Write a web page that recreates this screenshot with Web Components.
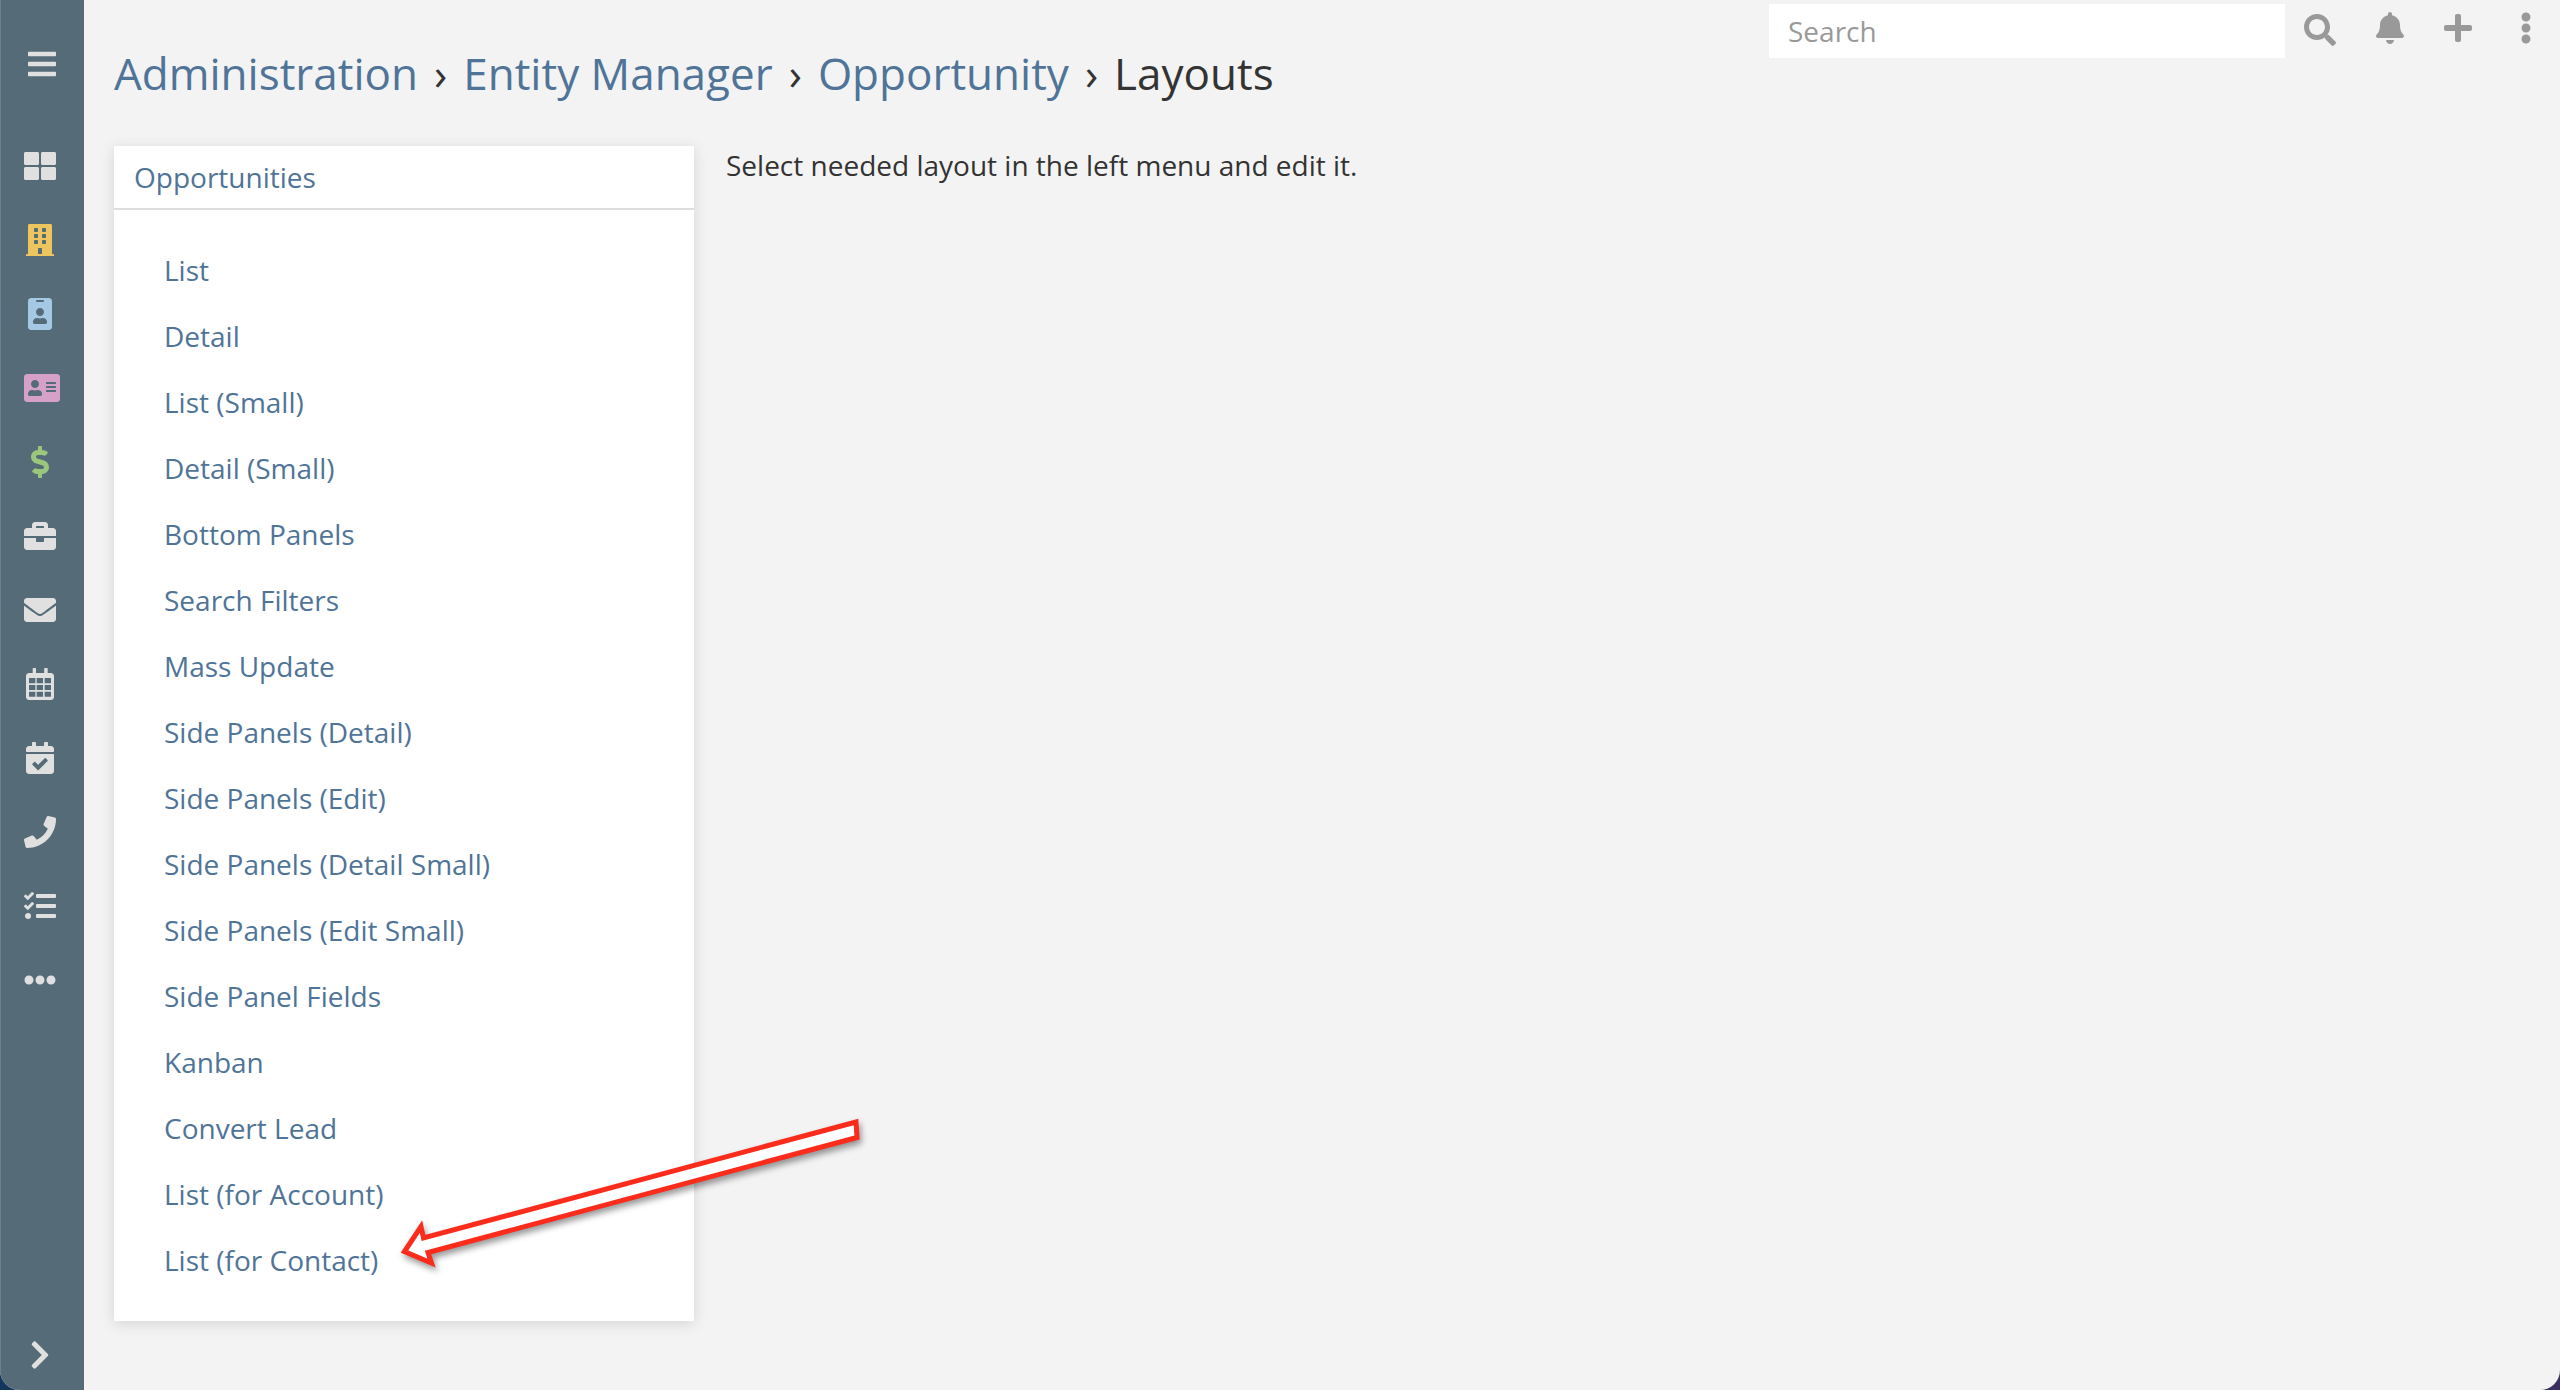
<!DOCTYPE html>
<html lang="en">
<head>
<meta charset="utf-8">
<title>Layouts</title>
<style>
html, body { margin: 0; height: 100%; overflow: hidden; }
body {
    background: linear-gradient(90deg, #14365c, #3a2f5e);
    font-family: "Open Sans", sans-serif;
    color: #333;
}
</style>
</head>
<body>
<crm-app>
    <crm-sidenav slot="nav"></crm-sidenav>
    <crm-header slot="header">
        <crm-crumbs slot="title" items="Administration,Entity Manager,Opportunity" current="Layouts"></crm-crumbs>
        <crm-tools slot="tools"></crm-tools>
    </crm-header>
    <crm-menu title-text="Opportunities" slot="menu">
        <a>List</a>
        <a>Detail</a>
        <a>List (Small)</a>
        <a>Detail (Small)</a>
        <a>Bottom Panels</a>
        <a>Search Filters</a>
        <a>Mass Update</a>
        <a>Side Panels (Detail)</a>
        <a>Side Panels (Edit)</a>
        <a>Side Panels (Detail Small)</a>
        <a>Side Panels (Edit Small)</a>
        <a>Side Panel Fields</a>
        <a>Kanban</a>
        <a>Convert Lead</a>
        <a>List (for Account)</a>
        <a>List (for Contact)</a>
    </crm-menu>
    <span slot="content">Select needed layout in the left menu and edit it.</span>
    <crm-arrow slot="overlay"></crm-arrow>
</crm-app>
<script>
const ICONS = {
    bars: [448, 'M16 132h416c8.837 0 16-7.163 16-16V76c0-8.837-7.163-16-16-16H16C7.163 60 0 67.163 0 76v40c0 8.837 7.163 16 16 16zm0 160h416c8.837 0 16-7.163 16-16v-40c0-8.837-7.163-16-16-16H16c-8.837 0-16 7.163-16 16v40c0 8.837 7.163 16 16 16zm0 160h416c8.837 0 16-7.163 16-16v-40c0-8.837-7.163-16-16-16H16c-8.837 0-16 7.163-16 16v40c0 8.837 7.163 16 16 16z'],
    grid: [512, 'M296 32h192c13.255 0 24 10.745 24 24v160c0 13.255-10.745 24-24 24H296c-13.255 0-24-10.745-24-24V56c0-13.255 10.745-24 24-24zm-80 0H24C10.745 32 0 42.745 0 56v160c0 13.255 10.745 24 24 24h192c13.255 0 24-10.745 24-24V56c0-13.255-10.745-24-24-24zM0 296v160c0 13.255 10.745 24 24 24h192c13.255 0 24-10.745 24-24V296c0-13.255-10.745-24-24-24H24c-13.255 0-24 10.745-24 24zm296 184h192c13.255 0 24-10.745 24-24V296c0-13.255-10.745-24-24-24H296c-13.255 0-24 10.745-24 24v160c0 13.255 10.745 24 24 24z'],
    building: [448, 'M436 480h-20V24c0-13.255-10.745-24-24-24H56C42.745 0 32 10.745 32 24v456H12c-6.627 0-12 5.373-12 12v20h448v-20c0-6.627-5.373-12-12-12zM128 76c0-6.627 5.373-12 12-12h40c6.627 0 12 5.373 12 12v40c0 6.627-5.373 12-12 12h-40c-6.627 0-12-5.373-12-12V76zm0 96c0-6.627 5.373-12 12-12h40c6.627 0 12 5.373 12 12v40c0 6.627-5.373 12-12 12h-40c-6.627 0-12-5.373-12-12v-40zm52 148h-40c-6.627 0-12-5.373-12-12v-40c0-6.627 5.373-12 12-12h40c6.627 0 12 5.373 12 12v40c0 6.627-5.373 12-12 12zm76 160h-64v-84c0-6.627 5.373-12 12-12h40c6.627 0 12 5.373 12 12v84zm64-172c0 6.627-5.373 12-12 12h-40c-6.627 0-12-5.373-12-12v-40c0-6.627 5.373-12 12-12h40c6.627 0 12 5.373 12 12v40zm0-96c0 6.627-5.373 12-12 12h-40c-6.627 0-12-5.373-12-12v-40c0-6.627 5.373-12 12-12h40c6.627 0 12 5.373 12 12v40zm0-96c0 6.627-5.373 12-12 12h-40c-6.627 0-12-5.373-12-12V76c0-6.627 5.373-12 12-12h40c6.627 0 12 5.373 12 12v40z'],
    badge: [384, 'M336 0H48C21.5 0 0 21.5 0 48v416c0 26.5 21.5 48 48 48h288c26.5 0 48-21.5 48-48V48c0-26.5-21.5-48-48-48zM144 32h96c8.8 0 16 7.2 16 16s-7.2 16-16 16h-96c-8.8 0-16-7.2-16-16s7.2-16 16-16zm48 128c35.3 0 64 28.7 64 64s-28.7 64-64 64-64-28.7-64-64 28.7-64 64-64zm112 236.8c0 10.6-10 19.2-22.4 19.2H102.4C90 416 80 407.4 80 396.8v-19.2c0-31.8 30.1-57.6 67.2-57.6h5c12.3 5.1 25.7 8 39.8 8s27.6-2.9 39.8-8h5c37.1 0 67.2 25.8 67.2 57.6v19.2z'],
    card: [576, 'M528 32H48C21.5 32 0 53.5 0 80v352c0 26.5 21.5 48 48 48h480c26.5 0 48-21.5 48-48V80c0-26.5-21.5-48-48-48zm-352 96c35.3 0 64 28.7 64 64s-28.7 64-64 64-64-28.7-64-64 28.7-64 64-64zm112 236.8c0 10.6-10 19.2-22.4 19.2H86.4C74 384 64 375.4 64 364.8v-19.2c0-31.8 30.1-57.6 67.2-57.6h5c12.3 5.1 25.7 8 39.8 8s27.6-2.9 39.8-8h5c37.1 0 67.2 25.8 67.2 57.6v19.2zM512 312c0 4.4-3.6 8-8 8H360c-4.4 0-8-3.6-8-8v-16c0-4.4 3.6-8 8-8h144c4.4 0 8 3.6 8 8v16zm0-64c0 4.4-3.6 8-8 8H360c-4.4 0-8-3.6-8-8v-16c0-4.4 3.6-8 8-8h144c4.4 0 8 3.6 8 8v16zm0-64c0 4.4-3.6 8-8 8H360c-4.4 0-8-3.6-8-8v-16c0-4.4 3.6-8 8-8h144c4.4 0 8 3.6 8 8v16z'],
    dollar: [288, 'M209.2 233.4l-108-31.6C88.7 198.2 80 186.5 80 173.5c0-16.3 13.2-29.5 29.5-29.5h66.3c12.2 0 24.2 3.7 34.2 10.5 6.1 4.1 14.3 3.1 19.5-2l34.8-34c7.1-6.9 6.1-18.4-1.8-24.5C238 74.8 207.4 64.1 176 64V16c0-8.8-7.2-16-16-16h-32c-8.8 0-16 7.2-16 16v48h-2.5C45.8 64-5.4 118.7.5 183.6c4.2 46.1 39.4 83.6 83.8 96.6l102.5 30c12.5 3.7 21.2 15.3 21.2 28.3 0 16.3-13.2 29.5-29.5 29.5h-66.3C100 368 88 364.3 78 357.5c-6.1-4.1-14.3-3.1-19.5 2l-34.8 34c-7.1 6.9-6.1 18.4 1.8 24.5 24.5 19.2 55.1 29.9 86.5 30v48c0 8.8 7.2 16 16 16h32c8.8 0 16-7.2 16-16v-48.2c46.6-.9 90.3-28.6 105.7-72.7 21.5-61.6-14.6-124.8-72.5-141.7z'],
    briefcase: [512, 'M320 336c0 8.84-7.16 16-16 16h-96c-8.84 0-16-7.16-16-16v-48H0v144c0 25.6 22.4 48 48 48h416c25.6 0 48-22.4 48-48V288H320v48zm144-208h-80V80c0-25.6-22.4-48-48-48H176c-25.6 0-48 22.4-48 48v48H48c-25.6 0-48 22.4-48 48v80h512v-80c0-25.6-22.4-48-48-48zm-144 0H192V96h128v32z'],
    envelope: [512, 'M502.3 190.8c3.9-3.1 9.7-.2 9.7 4.7V400c0 26.5-21.5 48-48 48H48c-26.5 0-48-21.5-48-48V195.6c0-5 5.7-7.8 9.7-4.7 22.4 17.4 52.1 39.5 154.1 113.6 21.1 15.4 56.7 47.8 92.2 47.6 35.7.3 72-32.8 92.3-47.6 102-74.1 131.6-96.3 154-113.7zM256 320c23.2.4 56.6-29.2 73.4-41.4 132.7-96.3 142.8-104.7 173.4-128.7 5.8-4.5 9.2-11.5 9.2-18.9v-19c0-26.5-21.5-48-48-48H48C21.5 64 0 85.5 0 112v19c0 7.4 3.4 14.3 9.2 18.9 30.6 23.9 40.7 32.4 173.4 128.7 16.8 12.2 50.2 41.8 73.4 41.4z'],
    calendar: [448, 'M107 12c0-6.6 5.4-12 12-12h29c6.6 0 12 5.4 12 12v68h131V12c0-6.6 5.4-12 12-12h32c6.600 0 12 5.400 12 12v68h53c26.500 0 48 21.500 48 48v336c0 26.500-21.500 48-48 48H48c-26.500 0-48-21.500-48-48V128c0-26.500 21.500-48 48-48h59zM48 160v85h102v-85zm123 0v85h101v-85zm127 0v85h102v-85zM48 272v80h102v-80zm123 0v80h101v-80zm127 0v80h102v-80zM48 379v80h102v-80zm123 0v80h101v-80zm127 0v80h102v-80z'],
    check: [448, 'M436 160H12c-6.627 0-12-5.373-12-12v-36c0-26.51 21.49-48 48-48h48V12c0-6.627 5.373-12 12-12h40c6.627 0 12 5.373 12 12v52h128V12c0-6.627 5.373-12 12-12h40c6.627 0 12 5.373 12 12v52h48c26.51 0 48 21.49 48 48v36c0 6.627-5.373 12-12 12zM12 192h424c6.627 0 12 5.373 12 12v260c0 26.51-21.49 48-48 48H48c-26.51 0-48-21.49-48-48V204c0-6.627 5.373-12 12-12zm333.296 95.947l-28.169-28.398c-4.667-4.705-12.265-4.736-16.97-.068L194.12 364.665l-45.98-46.352c-4.667-4.705-12.266-4.736-16.971-.068l-28.397 28.17c-4.705 4.667-4.736 12.265-.068 16.97l82.601 83.269c4.667 4.705 12.265 4.736 16.97.068l142.953-141.805c4.705-4.667 4.736-12.265.068-16.97z'],
    phone: [512, 'M493.4 24.6l-104-24c-11.3-2.6-22.9 3.3-27.5 13.9l-48 112c-4.2 9.8-1.4 21.3 6.9 28l60.6 49.6c-36 76.7-98.9 140.5-177.2 177.2l-49.6-60.6c-6.800-8.300-18.200-11.100-28-6.900l-112 48C3.900 366.500-2 378.100.6 389.400l24 104C27.100 504.200 36.700 512 48 512c256.100 0 464-207.500 464-464 0-11.200-7.700-20.900-18.600-23.400z'],
    tasks: [512, 'M139.61 35.5a12 12 0 0 0-17 0L58.93 98.81l-22.7-22.12a12 12 0 0 0-17 0L3.53 92.41a12 12 0 0 0 0 17l47.59 47.4a12.78 12.78 0 0 0 17.61 0l15.59-15.62L156.52 69a12.09 12.09 0 0 0 .09-17zm0 159.19a12 12 0 0 0-17 0l-63.68 63.72-22.7-22.1a12 12 0 0 0-17 0L3.53 252a12 12 0 0 0 0 17L51 316.5a12.77 12.77 0 0 0 17.6 0l15.7-15.69 72.2-72.22a12 12 0 0 0 .09-16.9zM64 368c-26.49 0-48.59 21.5-48.59 48S37.53 464 64 464a48 48 0 0 0 0-96zm432 16H208a16 16 0 0 0-16 16v32a16 16 0 0 0 16 16h288a16 16 0 0 0 16-16v-32a16 16 0 0 0-16-16zm0-320H208a16 16 0 0 0-16 16v32a16 16 0 0 0 16 16h288a16 16 0 0 0 16-16V80a16 16 0 0 0-16-16zm0 160H208a16 16 0 0 0-16 16v32a16 16 0 0 0 16 16h288a16 16 0 0 0 16-16v-32a16 16 0 0 0-16-16z'],
    dots: [512, 'M328 256c0 39.8-32.2 72-72 72s-72-32.2-72-72 32.2-72 72-72 72 32.2 72 72zm104-72c-39.8 0-72 32.2-72 72s32.2 72 72 72 72-32.2 72-72-32.2-72-72-72zm-352 0c-39.8 0-72 32.2-72 72s32.2 72 72 72 72-32.2 72-72-32.2-72-72-72z'],
    chevron: [320, 'M285.476 272.971L91.132 467.314c-9.373 9.373-24.569 9.373-33.941 0l-22.667-22.667c-9.357-9.357-9.375-24.522-.04-33.901L188.505 256 34.484 101.255c-9.335-9.379-9.317-24.544.04-33.901l22.667-22.667c9.373-9.373 24.569-9.373 33.941 0L285.475 239.03c9.373 9.372 9.373 24.568.001 33.941z'],
    search: [512, 'M505 442.7L405.3 343c-4.5-4.5-10.6-7-17-7H372c27.6-35.3 44-79.7 44-128C416 93.1 322.9 0 208 0S0 93.1 0 208s93.1 208 208 208c48.3 0 92.7-16.4 128-44v16.3c0 6.4 2.5 12.5 7 17l99.7 99.7c9.4 9.4 24.6 9.4 33.9 0l28.3-28.3c9.4-9.4 9.4-24.6.1-34zM208 336c-70.7 0-128-57.2-128-128 0-70.7 57.2-128 128-128 70.7 0 128 57.2 128 128 0 70.7-57.2 128-128 128z'],
    bell: [448, 'M224 512c35.32 0 63.97-28.65 63.97-64H160.03c0 35.35 28.65 64 63.97 64zm215.39-149.71c-19.32-20.76-55.47-51.99-55.47-154.29 0-77.7-54.48-139.9-127.94-155.16V32c0-17.67-14.32-32-31.98-32s-31.98 14.33-31.98 32v20.84C118.56 68.1 64.08 130.3 64.08 208c0 102.3-36.15 133.53-55.47 154.29-6 6.45-8.66 14.16-8.61 21.71.11 16.4 12.98 32 32.1 32h383.8c19.12 0 32-15.6 32.1-32 .05-7.55-2.61-15.27-8.61-21.71z'],
    plus: [448, 'M416 208H272V64c0-17.67-14.33-32-32-32h-32c-17.67 0-32 14.33-32 32v144H32c-17.67 0-32 14.33-32 32v32c0 17.67 14.33 32 32 32h144v144c0 17.67 14.33 32 32 32h32c17.67 0 32-14.33 32-32V304h144c17.67 0 32-14.33 32-32v-32c0-17.67-14.33-32-32-32z'],
    kebab: [192, 'M96 184c39.8 0 72 32.2 72 72s-32.2 72-72 72-72-32.2-72-72 32.2-72 72-72zM24 80c0 39.8 32.2 72 72 72s72-32.2 72-72S135.8 8 96 8 24 40.2 24 80zm0 352c0 39.8 32.2 72 72 72s72-32.2 72-72-32.2-72-72-72-72 32.2-72 72z']
};

customElements.define('crm-icon', class extends HTMLElement {
    constructor() {
        super();
        const [w, d] = ICONS[this.getAttribute('name')];
        const size = Number(this.getAttribute('size') || 32);
        this.attachShadow({mode: 'open'}).innerHTML = `
            <style>
            :host { display: block; line-height: 0; color: inherit; }
            svg { display: block; fill: currentColor; }
            </style>
            <svg width="${size * w / 512}" height="${size}" viewBox="0 0 ${w} 512"><path fill-rule="evenodd" d="${d}"/></svg>`;
    }
});

const app = document.createElement('template');
app.innerHTML = `
    <style>
    :host {
        display: flex;
        width: 2560px;
        height: 1390px;
        position: relative;
        overflow: hidden;
        background: #f3f3f3;
        border-radius: 0 0 20px 20px;
    }
    .main {
        flex: 1;
        display: flex;
        flex-direction: column;
        padding: 0 0 0 30px;
    }
    .body {
        display: flex;
        gap: 32px;
        align-items: flex-start;
    }
    .content {
        font-size: 28px;
        line-height: 38px;
        color: #333;
    }
    </style>
    <slot name="nav"></slot>
    <div class="main">
        <slot name="header"></slot>
        <div class="body">
            <slot name="menu"></slot>
            <div class="content"><slot name="content"></slot></div>
        </div>
    </div>
    <slot name="overlay"></slot>
`;
customElements.define('crm-app', class extends HTMLElement {
    constructor() {
        super();
        this.attachShadow({mode: 'open'}).appendChild(app.content.cloneNode(true));
    }
});

const NAV_ITEMS = [
    ['grid', '#e0e0e0'], ['building', '#ecc55f'], ['badge', '#a5c8e4'], ['card', '#d5a1c8'],
    ['dollar', '#9bc67b'], ['briefcase', '#e0e0e0'], ['envelope', '#e0e0e0'], ['calendar', '#e0e0e0'],
    ['check', '#e0e0e0'], ['phone', '#e0e0e0'], ['tasks', '#e0e0e0'], ['dots', '#e0e0e0']
];
customElements.define('crm-sidenav', class extends HTMLElement {
    constructor() {
        super();
        const links = NAV_ITEMS.map(([name, color]) =>
            `<a class="${name}" style="color:${color}"><crm-icon name="${name}"></crm-icon></a>`).join('');
        this.attachShadow({mode: 'open'}).innerHTML = `
            <style>
            :host {
                display: flex;
                flex-direction: column;
                align-items: stretch;
                width: 84px;
                height: 100%;
                background: #556b78;
                box-shadow: inset 1px 0 0 #6c808c;
                color: #e0e0e0;
                flex: none;
            }
            a {
                display: flex;
                align-items: center;
                justify-content: center;
                height: 74px;
                padding-right: 4px;
                flex: none;
            }
            .toggle { margin-top: 27px; margin-bottom: 28px; padding-right: 0; }
            .card { padding-right: 0; }
            .expand { margin-top: auto; height: 70px; }
            </style>
            <a class="toggle"><crm-icon name="bars"></crm-icon></a>
            ${links}
            <a class="expand"><crm-icon name="chevron"></crm-icon></a>`;
    }
});

customElements.define('crm-header', class extends HTMLElement {
    constructor() {
        super();
        this.attachShadow({mode: 'open'}).innerHTML = `
            <style>
            :host {
                display: flex;
                justify-content: space-between;
                align-items: flex-start;
                height: 146px;
                flex: none;
            }
            </style>
            <slot name="title"></slot>
            <slot name="tools"></slot>`;
    }
});

customElements.define('crm-crumbs', class extends HTMLElement {
    constructor() {
        super();
        const links = this.getAttribute('items').split(',')
            .map(t => `<a>${t}</a><span class="sep">›</span>`).join('');
        this.attachShadow({mode: 'open'}).innerHTML = `
            <style>
            :host {
                display: block;
                padding-top: 43px;
                font-size: 44px;
                line-height: 60px;
                color: #333;
                white-space: nowrap;
            }
            a { color: #4f7498; }
            .sep { margin: 0 16px; }
            </style>
            ${links}<span>${this.getAttribute('current')}</span>`;
    }
});

customElements.define('crm-tools', class extends HTMLElement {
    constructor() {
        super();
        this.attachShadow({mode: 'open'}).innerHTML = `
            <style>
            :host {
                display: flex;
                align-items: center;
                padding: 4px 28px 0 0;
                color: #999;
            }
            .search {
                width: 516px;
                height: 54px;
                box-sizing: border-box;
                padding-left: 19px;
                background: #fff;
                font-size: 28px;
                line-height: 54px;
                margin-right: 19px;
            }
            crm-icon { margin-top: -6px; }
            .find { margin-top: -2px; }
            .bell, .plus { margin-left: 40px; }
            .kebab { margin-left: 48px; }
            </style>
            <div class="search">Search</div>
            <crm-icon class="find" name="search"></crm-icon>
            <crm-icon class="bell" name="bell"></crm-icon>
            <crm-icon class="plus" name="plus"></crm-icon>
            <crm-icon class="kebab" name="kebab"></crm-icon>`;
    }
});

customElements.define('crm-menu', class extends HTMLElement {
    constructor() {
        super();
        this.attachShadow({mode: 'open'}).innerHTML = `
            <style>
            :host {
                display: block;
                width: 580px;
                flex: none;
                background: #fff;
                box-shadow: 0 3px 14px rgba(0,0,0,0.12);
                color: #4f7498;
                font-size: 28px;
            }
            .head {
                height: 62px;
                padding-left: 20px;
                line-height: 62px;
                border-bottom: 2px solid #ddd;
            }
            .list {
                display: flex;
                flex-direction: column;
                padding: 27px 0 28px 50px;
            }
            ::slotted(a) { display: block; height: 66px; line-height: 66px; }
            </style>
            <div class="head">${this.getAttribute('title-text')}</div>
            <div class="list"><slot></slot></div>`;
    }
});

customElements.define('crm-arrow', class extends HTMLElement {
    constructor() {
        super();
        this.attachShadow({mode: 'open'}).innerHTML = `
            <style>
            :host {
                position: absolute;
                left: 0;
                top: 0;
                pointer-events: none;
            }
            svg { display: block; overflow: visible; filter: drop-shadow(2px 4px 3px rgba(0,0,0,0.4)); }
            </style>
            <svg width="2560" height="1390" viewBox="0 0 2560 1390">
                <polygon points="404.500,1251.500 421,1226.500 423.500,1238 856,1122 857,1137.500 428,1252.500 431.500,1263"
                    fill="#fff" stroke="#fb2c1c" stroke-width="5" stroke-linejoin="miter"/>
            </svg>`;
    }
});
</script>
</body>
</html>
